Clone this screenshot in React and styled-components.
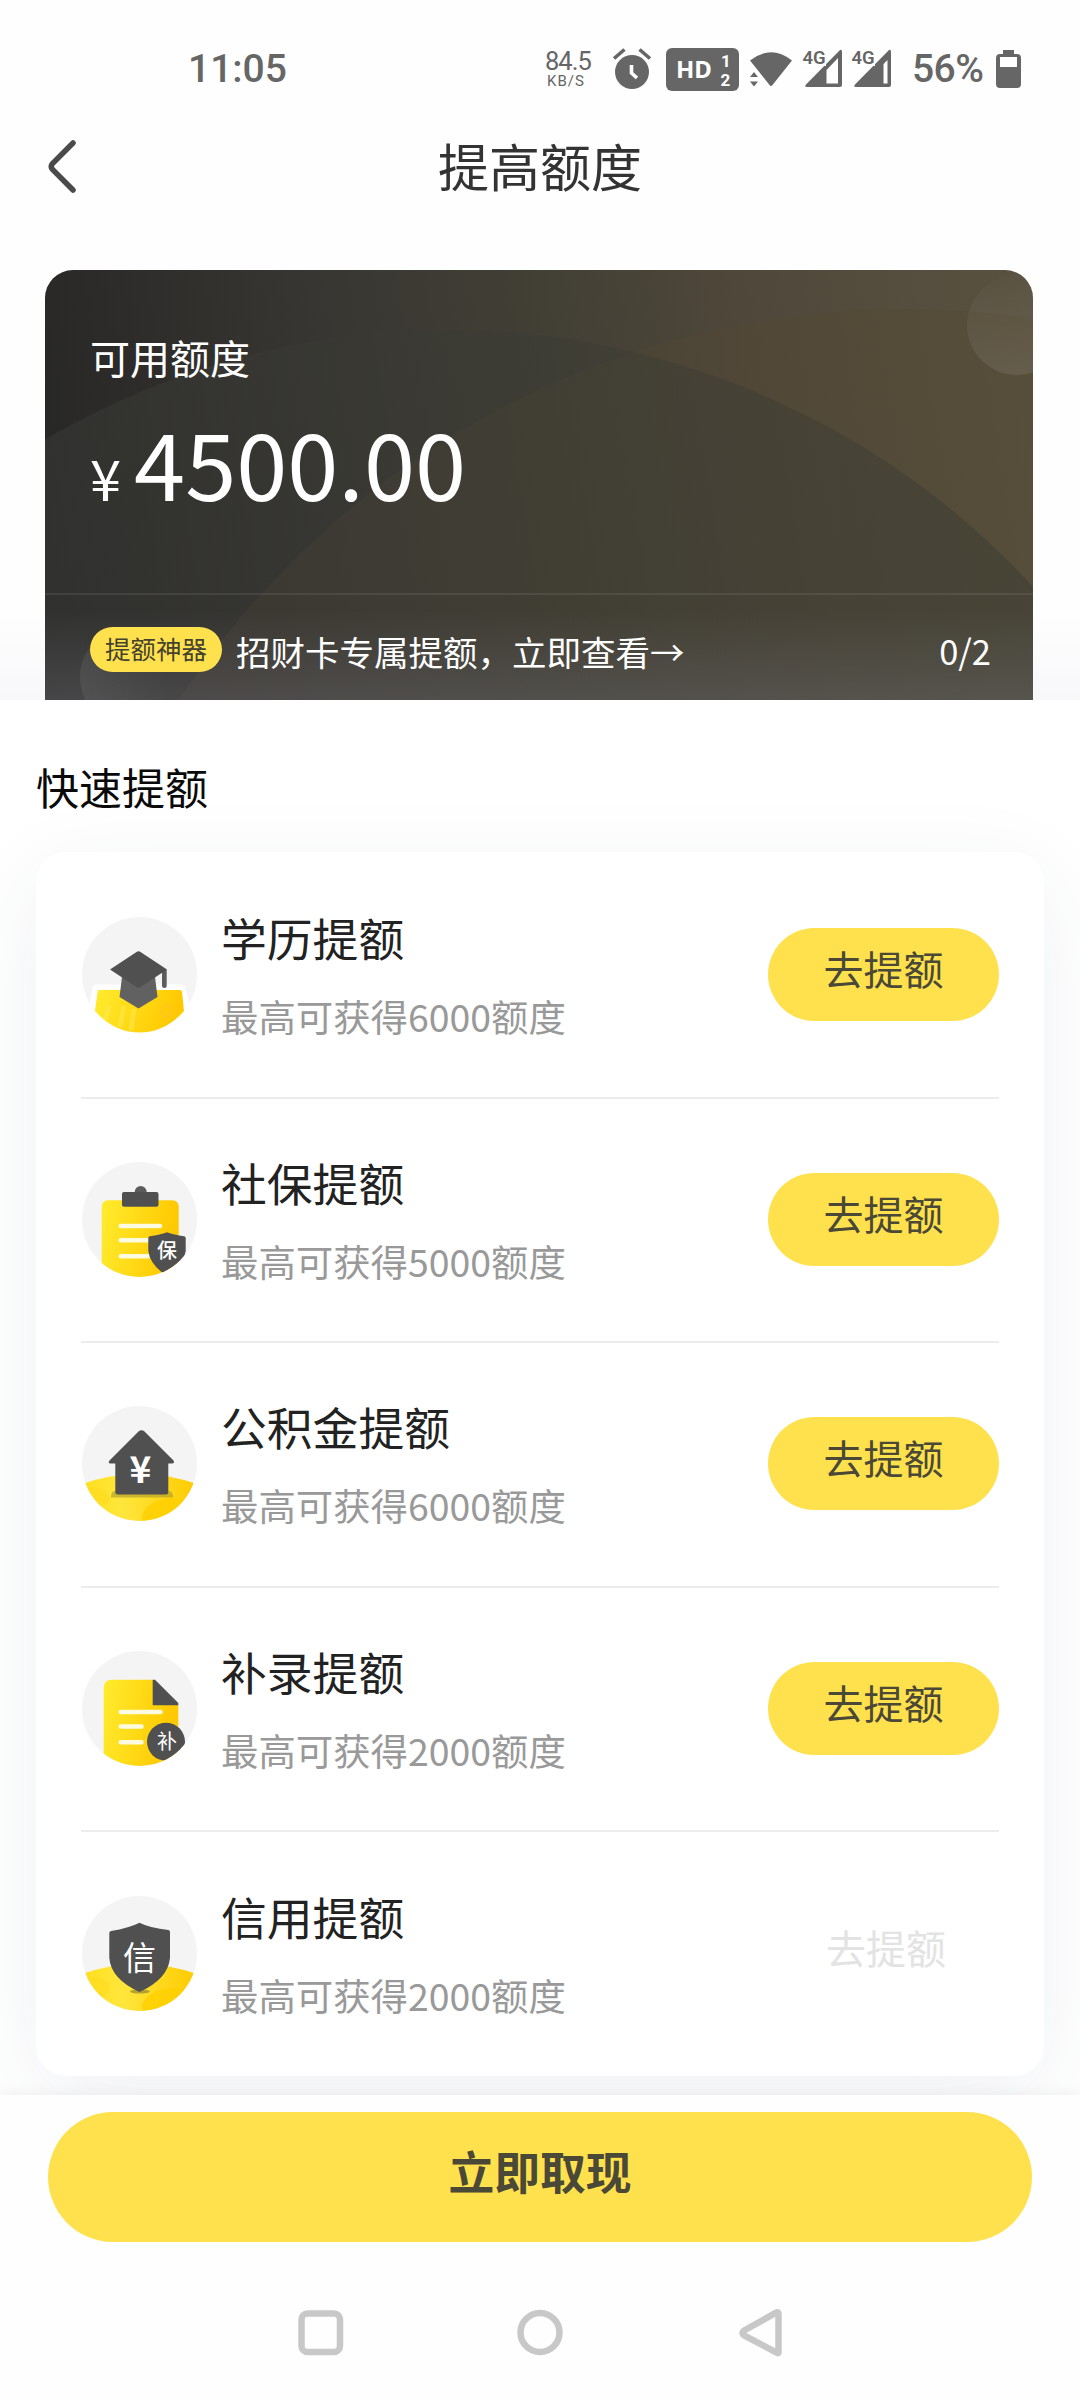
import styled, { createGlobalStyle } from 'styled-components';

const rows = [
  { icon: 'education', title: '学历提额', amount: 6000 },
  { icon: 'social', title: '社保提额', amount: 5000 },
  { icon: 'fund', title: '公积金提额', amount: 6000 },
  { icon: 'record', title: '补录提额', amount: 2000 },
  { icon: 'credit', title: '信用提额', amount: 2000, disabled: true },
];

function App() {
  return (
    <Screen>
      <GlobalStyle/>
      <StatusBar/>
      <Header>
        <BackIcon viewBox='0 0 30 56'>
          <path d='M26 4 L5.500 24.500 Q3 27.500 5.500 30.500 L26 51' />
        </BackIcon>
        <HeaderTitle>提高额度</HeaderTitle>
      </Header>
      <CardArea>
        <CreditCard/>
      </CardArea>
      <Content>
        <SectionTitle>快速提额</SectionTitle>
        <List>
          {rows.map((row) => (
            <Row key={row.icon}>
              <RowIcon type={row.icon}/>
              <RowText>
                <div className='title'>{row.title}</div>
                <div className='desc'>最高可获得{row.amount}额度</div>
              </RowText>
              <RowButton $disabled={row.disabled}>去提额</RowButton>
            </Row>
          ))}
        </List>
      </Content>
      <Footer>
        <CashButton>立即取现</CashButton>
        <NavBar viewBox='0 0 484 56'>
          <rect x='3.500' y='8.500' width='38.500' height='38.500' rx='6' />
          <circle cx='242' cy='27.500' r='19.500' />
          <path d='M480.500 9 V47 Q480.500 49 478.500 47.500 L447 31 Q442 28 447 25 L478.500 7.500 Q480.500 6.500 480.500 9 Z' />
        </NavBar>
      </Footer>
    </Screen>
  );
}

export default App;

function StatusBar() {
  return (
    <Status>
      <Time>11:05</Time>
      <StatusIcons>
        <NetSpeed>
          <div className='value'>84.5</div>
          <div className='unit'>KB/S</div>
        </NetSpeed>
        <Glyphs viewBox='0 0 286 60'>
          {/* alarm */}
          <circle cx='22' cy='32' r='17' />
          <path d='M4 18.500 L14.500 9.500 M40 18.500 L29.500 9.500' stroke='#666' strokeWidth='3.600' />
          <path d='M21.500 25 V33 L27 38' stroke='#fff' strokeWidth='3.600' fill='none' />
          {/* HD */}
          <rect x='56' y='8' width='73' height='43' rx='6' />
          <text x='66' y='38' fontSize='24' fontWeight='700' fill='#fff' className='hd'>HD</text>
          <text x='111' y='27' fontSize='17' fontWeight='700' fill='#fff'>1</text>
          <text x='110.500' y='45.500' fontSize='17' fontWeight='700' fill='#fff'>2</text>
          {/* wifi */}
          <path d='M140 20.500 Q161 4 182 20.500 L162.500 45 Q161 47 159.500 45 Z' />
          <path d='M144 32 L148 37 H140 Z M144 46.500 L148 41.500 H140 Z' />
          {/* signal */}
          <path d='M230 10 Q232 9 232 12 V45 Q232 47 230 47 H197 Q194 47 196 44.500 Z M228 18 L216.500 30 V43.500 H228 Z' fillRule='evenodd' />
          <path d='M279 10 Q281 9 281 12 V45 Q281 47 279 47 H246 Q243 47 245 44.500 Z M277.500 20 L273.500 24 V43.500 H277.500 Z' fillRule='evenodd' />
          <rect x='190' y='8' width='26' height='18' fill='#fff' />
          <rect x='240' y='8' width='25' height='18' fill='#fff' />
          <text x='192.500' y='24' fontSize='18.500' fontWeight='600'>4G</text>
          <text x='241.500' y='24' fontSize='18.500' fontWeight='600'>4G</text>
        </Glyphs>
        <Percent>56%</Percent>
        <Battery viewBox='0 0 25 38'>
          <path d='M7 0 H18 V4 H21 Q25 4 25 8 V34 Q25 38 21 38 H4 Q0 38 0 34 V8 Q0 4 4 4 H7 Z' />
          <rect x='4' y='7' width='17' height='10' fill='#fff' />
        </Battery>
      </StatusIcons>
    </Status>
  );
}

function CreditCard() {
  return (
    <Card>
      <CardArt viewBox='0 0 988 430'>
        <defs>
          <linearGradient id='arc' x1='0' y1='0' x2='1' y2='0'>
            <stop offset='0' stopColor='#4c4f4a' stopOpacity='.42' />
            <stop offset='.4' stopColor='#3b3b36' stopOpacity='.34' />
            <stop offset='1' stopColor='#2c3430' stopOpacity='.38' />
          </linearGradient>
          <linearGradient id='arc2' x1='0' y1='0' x2='1' y2='0'>
            <stop offset='0' stopColor='#5a4a38' stopOpacity='.25' />
            <stop offset='1' stopColor='#4a4426' stopOpacity='.35' />
          </linearGradient>
          <linearGradient id='fade' x1='0' y1='0' x2='0' y2='1'>
            <stop offset='0' stopColor='#80808c' stopOpacity='0' />
            <stop offset='1' stopColor='#80808c' stopOpacity='.27' />
          </linearGradient>
          <linearGradient id='bubble' x1='0' y1='0' x2='1' y2='0'>
            <stop offset='0' stopColor='#fff' stopOpacity='.08' />
            <stop offset='.9' stopColor='#fff' stopOpacity='0' />
          </linearGradient>
          <linearGradient id='bubble2' x1='0' y1='0' x2='0' y2='1'>
            <stop offset='0' stopColor='#fff' stopOpacity='.01' />
            <stop offset='1' stopColor='#fff' stopOpacity='.09' />
          </linearGradient>
        </defs>
        <circle cx='860' cy='909' r='870' fill='url(#arc2)' />
        <circle cx='403' cy='855' r='795' fill='url(#arc)' />
        <circle cx='972' cy='55' r='50' fill='url(#bubble2)' />
        <circle cx='85' cy='407' r='50' fill='url(#bubble)' />
        <rect y='340' width='988' height='90' fill='url(#fade)' />
      </CardArt>
      <CardMain>
        <div className='label'>可用额度</div>
        <div className='amount'><span>¥</span>4500.00</div>
      </CardMain>
      <CardPromo>
        <Badge>提额神器</Badge>
        <div className='text'>招财卡专属提额，立即查看→</div>
        <div className='count'>0/2</div>
      </CardPromo>
    </Card>
  );
}

function Hill() {
  return (
    <>
      <path d='M0 78 Q57 58 115 78 V115 H0 Z' fill='url(#hill)' />
      <ellipse cx='8' cy='92' rx='20' ry='11' fill='#ffd91c' fillOpacity='.5' />
      <ellipse cx='92' cy='112' rx='32' ry='20' fill='#ffcf00' fillOpacity='.8' />
    </>
  );
}

function RowIcon({ type }) {
  return (
    <IconSvg viewBox='0 0 115 117'>
      <defs>
        <clipPath id='round'><circle cx='57.500' cy='57.500' r='57.500' /></clipPath>
        <linearGradient id='sheet' x1='0' y1='0' x2='1' y2='.2'>
          <stop offset='0' stopColor='#ffec2e' />
          <stop offset='1' stopColor='#ffc800' />
        </linearGradient>
        <linearGradient id='hill' x1='0' y1='0' x2='1' y2='0'>
          <stop offset='0' stopColor='#ffe01c' />
          <stop offset='.35' stopColor='#ffe63c' />
          <stop offset='1' stopColor='#ffcb00' />
        </linearGradient>
      </defs>
      <circle cx='57.500' cy='57.500' r='57.500' fill='#f4f4f4' />
      {type === 'education' && (
        <>
          <path d='M10.500 71 Q10.500 67.500 14 67.500 H100 Q103.500 67.500 103.500 71 L108 90 V117 H7 V90 Z' fill='#fff' />
          <path d='M15.500 75 Q15.500 73 17.500 73 H98 Q100 73 100 75 L102 94 Q83 115.500 57.500 115.500 Q32 115.500 13 94 Z' fill='url(#sheet)' />
          <path d='M27 89 L23 103 M42 89 L38 110 M52 92 L49 113' stroke='#ffea50' strokeWidth='4.500' strokeOpacity='.55' />
          <circle cx='85' cy='94' r='5.500' fill='none' stroke='#ffc61c' strokeWidth='2.500' />
          <path d='M40 60 L37.500 80 L56.500 91.500 L75.500 80 L73 60 Z' fill='#616161' />
          <path d='M80 53 H84.700 V69 Q84.700 71 82.500 71 Q80 71 80 69 Z' fill='#5c5c5c' />
          <path d='M54.500 35 Q56.500 33.500 58.500 35 L85 52.500 L58.500 70 Q56.500 71.500 54.500 70 L28 52.500 Z' fill='#505050' />
        </>
      )}
      {type === 'social' && (
        <g clipPath='url(#round)'>
          <rect x='19.700' y='38.300' width='77' height='90' rx='6' fill='url(#sheet)' />
          <circle cx='58.700' cy='30' r='6' fill='#5c5c5c' />
          <rect x='40' y='30' width='36.500' height='14.700' rx='2' fill='#505050' />
          <path d='M38.700 64 H78 M38.700 78.200 H66 M38.700 94.200 H66' stroke='#fffbe0' strokeWidth='4.500' strokeLinecap='round' />
          <path d='M66.300 76 Q66.300 74.500 68 74.200 Q78 73 85 70.300 Q92 73 102 74.200 Q103.700 74.500 103.700 76 V89 Q102 103 85 114 Q68 103 66.300 89 Z' fill='#505050' />
          <text x='85' y='95.500' fontSize='20' fontWeight='500' textAnchor='middle' fill='#fff'>保</text>
        </g>
      )}
      {type === 'fund' && (
        <g clipPath='url(#round)'>
          <Hill/>
          <path d='M29 91.500 Q29 85 33 85 H87 Q91 85 91 91.500 Z' fill='#b3a32e' fillOpacity='.7' />
          <path d='M56.500 25.500 Q59.500 23 62.500 25.500 L91.500 54.500 Q93 57.500 90 57.500 H86.300 V86 Q86.300 88.500 84 88.500 H36 Q33.300 88.500 33.300 86 V57.500 H28.500 Q25.500 57.500 27.500 54.500 Z' fill='#505050' />
          <text x='58.500' y='77' fontSize='37' fontWeight='700' textAnchor='middle' fill='#fff'>¥</text>
        </g>
      )}
      {type === 'record' && (
        <g clipPath='url(#round)'>
          <path d='M21.700 37 Q21.700 28.700 30 28.700 H70.700 L96.300 54.300 V116 H21.700 Z' fill='url(#sheet)' />
          <path d='M70.700 28.700 H73 L96.300 52 V54.300 H70.700 Z' fill='#505050' />
          <path d='M38.700 61 H78.500 M38.700 75.500 H59.500 M38.700 91.300 H59.500' stroke='#fffbe0' strokeWidth='4.500' strokeLinecap='round' />
          <circle cx='84' cy='90.700' r='19' fill='#505050' />
          <text x='85' y='98' fontSize='20' textAnchor='middle' fill='#fff'>补</text>
        </g>
      )}
      {type === 'credit' && (
        <g clipPath='url(#round)'>
          <Hill/>
          <ellipse cx='58' cy='95.500' rx='10' ry='2' fill='#b3a32e' />
          <path d='M27.300 37 Q27.300 35.300 29 35 Q47 32 57.500 26.700 Q68 32 86.500 34 Q88 34.300 88 36 V62 Q86 83 57.500 96 Q29 83 27.300 62 Z' fill='#505050' />
          <text x='57.500' y='73.500' fontSize='33' textAnchor='middle' fill='#fff'>信</text>
        </g>
      )}
    </IconSvg>
  );
}

const GlobalStyle = createGlobalStyle`
  body {
    margin: 0;
    background: #fff;
  }
`

const Screen = styled.div`
  width: 1080px;
  height: 2400px;
  display: flex;
  flex-direction: column;
  overflow: hidden;
  background: #fefefe;
  font-family: 'Noto Sans CJK SC', 'Noto Sans', sans-serif;
`

const Status = styled.div`
  height: 120px;
  display: flex;
  justify-content: space-between;
  padding: 0 59px 0 188px;
  box-sizing: border-box;
  color: #666;
  font-family: Roboto, sans-serif;
`

const Time = styled.div`
  font-size: 39px;
  font-weight: 500;
  line-height: 46px;
  padding-top: 46px;
`

const StatusIcons = styled.div`
  display: flex;
  align-items: flex-start;
`

const NetSpeed = styled.div`
  width: 48px;
  padding-top: 48px;
  margin-right: 17px;
  white-space: nowrap;

  .value {
    font-size: 25.5px;
    font-weight: 400;
    line-height: 26px;
    letter-spacing: -1px;
  }

  .unit {
    font-size: 15px;
    font-weight: 400;
    line-height: 15px;
    margin-left: 2px;
    letter-spacing: 1px;
  }
`

const Glyphs = styled.svg`
  width: 286px;
  height: 60px;
  margin-top: 40px;
  fill: #666;
  font-family: Roboto, sans-serif;

  .hd {
    font-family: 'Noto Sans', sans-serif;
  }
`

const Percent = styled.div`
  width: 72px;
  font-size: 39px;
  font-weight: 500;
  line-height: 46px;
  padding-top: 46px;
  margin-left: 16px;
  letter-spacing: -0.6px;
`

const Battery = styled.svg`
  width: 25px;
  height: 38px;
  margin-top: 50px;
  margin-left: 12px;
  fill: #666;
`

const Header = styled.div`
  height: 90px;
  display: grid;
  grid-template-columns: 120px 1fr 120px;
  align-items: center;
`

const BackIcon = styled.svg`
  width: 30px;
  height: 56px;
  margin-left: 47px;
  margin-top: 4px;
  fill: none;
  stroke: #4a4a4a;
  stroke-width: 5.5;
  stroke-linecap: round;
`

const HeaderTitle = styled.div`
  font-size: 51px;
  line-height: 88px;
  text-align: center;
  color: #333;
`

const CardArea = styled.div`
  height: 490px;
  padding: 60px 47px 0 45px;
  box-sizing: border-box;
  background: linear-gradient(to bottom, #fefefe 400px, #f8f8fb);
`

const Card = styled.div`
  position: relative;
  height: 430px;
  overflow: hidden;
  border-radius: 28px 28px 0 0;
  background: linear-gradient(80deg, #262626 0%, #2c2b29 12%, #373632 32%, #434035 55%, #4f473a 72%, #5a5240 100%);
  color: #fff;
`

const CardArt = styled.svg`
  position: absolute;
  inset: 0;
  width: 988px;
  height: 430px;
`

const CardMain = styled.div`
  position: relative;
  height: 323px;
  padding: 57px 45px 0;
  box-sizing: border-box;

  .label {
    font-size: 40px;
    line-height: 60px;
  }

  .amount {
    font-size: 92px;
    line-height: 120px;
    margin-top: 14px;
    display: flex;
    align-items: baseline;
  }

  .amount span {
    font-size: 56px;
    margin-right: 13px;
  }
`

const CardPromo = styled.div`
  position: relative;
  height: 107px;
  display: flex;
  align-items: center;
  padding: 0 42px 0 45px;
  box-sizing: border-box;
  border-top: 2px solid rgba(255, 255, 255, 0.08);
  font-size: 34.5px;

  .text {
    flex: 1;
    margin-left: 14px;
    line-height: 48px;
    padding-top: 7px;
  }

  .count {
    line-height: 48px;
    padding-top: 4px;
  }
`

const Badge = styled.div`
  width: 132px;
  height: 45px;
  margin-top: 4px;
  border-radius: 23px;
  background: #ffe14d;
  color: #45412f;
  font-size: 25.5px;
  line-height: 42px;
  text-align: center;
`

const Content = styled.div`
  height: 1395px;
  padding: 0 36px;
  box-sizing: border-box;
  background: #fff;
  overflow: hidden;
`

const SectionTitle = styled.div`
  height: 152px;
  padding-top: 54px;
  box-sizing: border-box;
  font-size: 43px;
  line-height: 64px;
  color: #0a0a0a;
`

const List = styled.div`
  height: 1224px;
  padding: 2px 45px 0;
  box-sizing: border-box;
  border-radius: 30px;
  background: #fff;
  box-shadow: 0 24px 90px rgba(60, 70, 110, 0.075);
`

const Row = styled.div`
  height: 244.6px;
  display: flex;
  align-items: center;
  box-sizing: border-box;
  border-bottom: 2px solid #ececec;

  &:last-child {
    border-bottom-color: transparent;
  }
`

const IconSvg = styled.svg`
  width: 115px;
  height: 117px;
  margin-top: 1px;
  margin-left: 1px;
  font-family: 'Noto Sans CJK SC', sans-serif;
`

const RowText = styled.div`
  flex: 1;
  margin-left: 24px;
  margin-top: -4px;

  .title {
    font-size: 45.8px;
    line-height: 70px;
    color: #222;
  }

  .desc {
    font-size: 37.4px;
    line-height: 56px;
    margin-top: 16px;
    color: #999;
  }
`

const RowButton = styled.div`
  width: 231px;
  height: 93px;
  box-sizing: border-box;
  border-radius: 47px;
  margin-top: -1px;
  background: ${(props) => (props.$disabled ? 'transparent' : '#ffe14d')};
  color: ${(props) => (props.$disabled ? '#e3e3e3' : '#4a4836')};
  padding-left: ${(props) => (props.$disabled ? '5px' : '0')};
  font-size: 40px;
  line-height: 80px;
  text-align: center;
`

const Footer = styled.div`
  position: relative;
  height: 305px;
  padding: 17px 48px 0;
  box-sizing: border-box;
  background: #fefefe;
  box-shadow: 0 0 14px rgba(0, 0, 0, 0.07);
`

const CashButton = styled.div`
  height: 130px;
  border-radius: 65px;
  background: #ffe14d;
  color: #4a4836;
  font-size: 45.8px;
  font-weight: 700;
  line-height: 117px;
  text-align: center;
`

const NavBar = styled.svg`
  display: block;
  width: 484px;
  height: 56px;
  margin: 63px auto 0 250px;
  fill: none;
  stroke: #c8c8c8;
  stroke-width: 6.5;
`
